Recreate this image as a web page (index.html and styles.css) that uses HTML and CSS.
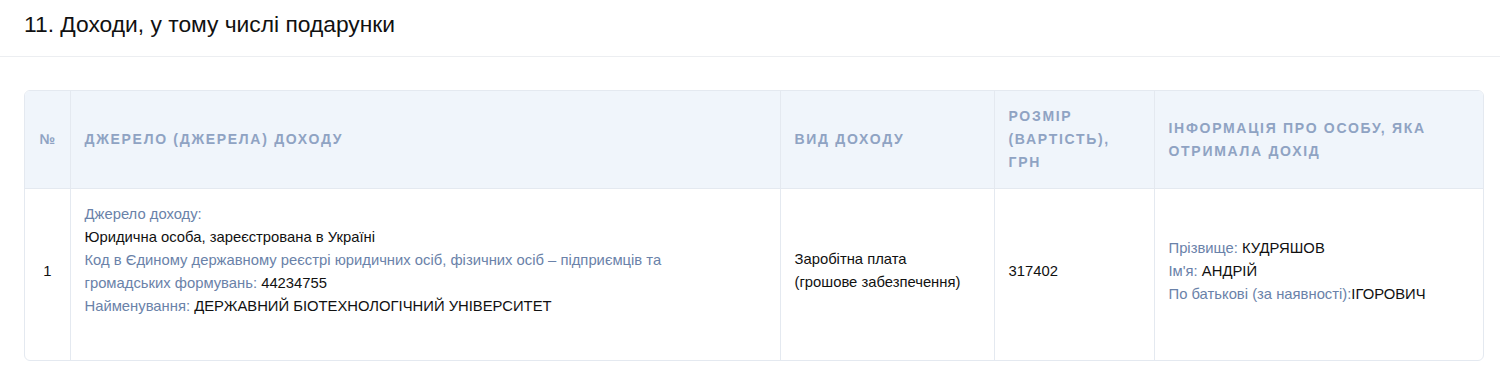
FILE: index.html
```html
<!DOCTYPE html>
<html lang="uk">
<head>
<meta charset="utf-8">
<link rel="stylesheet" href="styles.css">
</head>
<body>
<div class="section">
  <h2 class="section-title">11. Доходи, у тому числі подарунки</h2>
  <div class="section-body">
    <div class="table-wrap">
      <table class="income">
        <colgroup>
          <col class="c-num"><col class="c-src"><col class="c-kind"><col class="c-size"><col class="c-person">
        </colgroup>
        <thead>
          <tr>
            <th class="num">№</th>
            <th>Джерело (джерела) доходу</th>
            <th>Вид доходу</th>
            <th>Розмір (вартість), грн</th>
            <th>Інформація про особу, яка отримала дохід</th>
          </tr>
        </thead>
        <tbody>
          <tr>
            <td class="num">1</td>
            <td class="src">
              <div class="src-body">
                <div class="lbl">Джерело доходу:</div>
                <div>Юридична особа, зареєстрована в Україні</div>
                <div><span class="lbl">Код в Єдиному державному реєстрі юридичних осіб, фізичних осіб – підприємців та громадських формувань:</span> 44234755</div>
                <div><span class="lbl">Найменування:</span> ДЕРЖАВНИЙ БІОТЕХНОЛОГІЧНИЙ УНІВЕРСИТЕТ</div>
              </div>
            </td>
            <td>Заробітна плата<br>(грошове забезпечення)</td>
            <td>317402</td>
            <td>
              <div><span class="lbl">Прізвище:</span> КУДРЯШОВ</div>
              <div><span class="lbl">Ім'я:</span> АНДРІЙ</div>
              <div><span class="lbl">По батькові (за наявності):</span>ІГОРОВИЧ</div>
            </td>
          </tr>
        </tbody>
      </table>
    </div>
  </div>
</div>
</body>
</html>
```
FILE: styles.css
```css
* { box-sizing: border-box; }
html, body {
  margin: 0;
  padding: 0;
  background: #fff;
  font-family: "Liberation Sans", Arial, sans-serif;
  color: #111;
}
.section-title {
  margin: 0;
  padding: 11px 24px 0;
  height: 57px;
  border-bottom: 1px solid #eceef1;
  font-size: 22.8px;
  font-weight: 400;
  line-height: 27px;
  color: #111;
}
.section-body {
  padding: 33px 16px 0 24px;
}
.table-wrap {
  border: 1px solid #e4e9f0;
  border-radius: 6px;
  overflow: hidden;
}
.income {
  width: 100%;
  border-collapse: collapse;
  table-layout: fixed;
  font-size: 14.8px;
}
.c-num { width: 45px; }
.c-src { width: 710px; }
.c-kind { width: 214px; }
.c-size { width: 160px; }
.income th, .income td {
  border-left: 1px solid #e4e9f0;
  text-align: left;
  vertical-align: middle;
}
.income th:first-child, .income td:first-child { border-left: none; }
.income th {
  background: #f0f5fb;
  color: #8fa3c3;
  font-weight: 700;
  font-size: 14px;
  text-transform: uppercase;
  letter-spacing: 1.7px;
  line-height: 23px;
  padding: 13px 14px 12px;
  height: 97px;
  border-bottom: 1px solid #e4e9f0;
}
.income td {
  padding: 9px 14px 15px;
  line-height: 23px;
  height: 170px;
  color: #111;
}
.income .num {
  text-align: center;
  padding-left: 0;
  padding-right: 0;
}
.income th.num { letter-spacing: 0; }
.income td.src { padding-top: 14px; padding-bottom: 42px; }
.src-body { max-width: 620px; }
.lbl { color: #6a82a9; }
```
